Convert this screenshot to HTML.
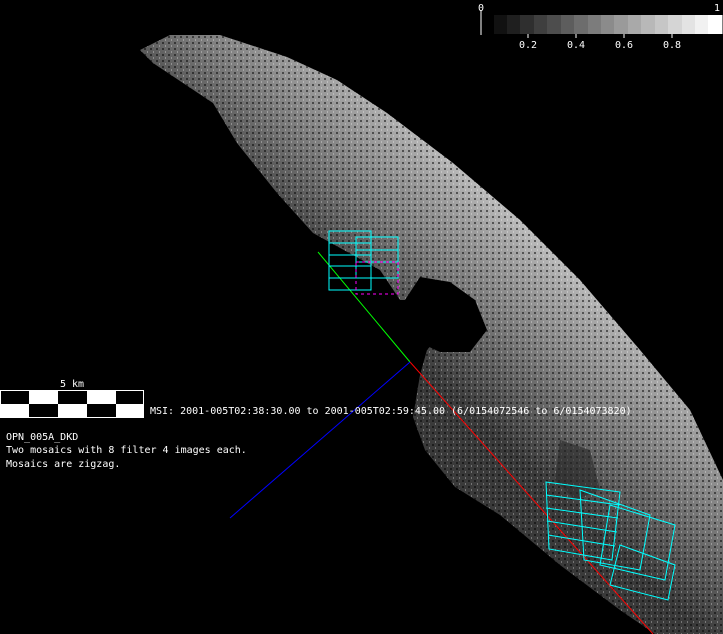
<!DOCTYPE html>
<html><head><meta charset="utf-8"><style>
html,body{margin:0;padding:0;background:#000;width:723px;height:634px;overflow:hidden}
svg{position:absolute;left:0;top:0}
.t{font-family:"DejaVu Sans Mono","Liberation Mono",monospace;font-size:10px;fill:#fff}
</style></head><body>
<svg width="723" height="634" viewBox="0 0 723 634">
<defs>
<linearGradient id="g" x1="380" y1="330" x2="520" y2="180" gradientUnits="userSpaceOnUse">
<stop offset="0" stop-color="#3a3a3a"/><stop offset="0.4" stop-color="#777"/><stop offset="0.75" stop-color="#a8a8a8"/><stop offset="1" stop-color="#dcdcdc"/>
</linearGradient>
<pattern id="p" width="6" height="6" patternUnits="userSpaceOnUse">
<rect x="0" y="0" width="2" height="2" fill="#000" opacity="0.5"/><rect x="3" y="3" width="1" height="2" fill="#fff" opacity="0.3"/>
</pattern>
</defs>
<polygon fill="url(#g)" points="140,50 170,35 220,35 287,57 337,80 387,113 453,163 520,220 580,280 640,350 690,410 723,480 723,634 655,634 620,610 560,565 500,515 455,487 425,450 413,417 420,375 427,350 440,335 455,310 430,300 400,300 380,270 313,233 277,193 237,143 213,103 153,63"/>
<polygon fill="url(#p)" points="140,50 170,35 220,35 287,57 337,80 387,113 453,163 520,220 580,280 640,350 690,410 723,480 723,634 655,634 620,610 560,565 500,515 455,487 425,450 413,417 420,375 427,350 440,335 455,310 430,300 400,300 380,270 313,233 277,193 237,143 213,103 153,63"/>
<polygon fill="#000" points="420,277 450,282 475,300 487,330 470,352 440,352 425,345 410,320 405,300"/>
<polygon fill="#2a2a2a" opacity="0.6" points="560,440 590,450 600,490 575,500 555,480"/>
<g stroke-width="1" fill="none">
<line x1="318" y1="252" x2="410" y2="362" stroke="#0f0"/>
<line x1="410" y1="362" x2="653" y2="634" stroke="#f00"/>
<line x1="410" y1="362" x2="230" y2="518" stroke="#00f"/>
</g>
<g stroke="#0ff" fill="none" stroke-width="1">
<rect x="329" y="231" width="42" height="59"/>
<rect x="356" y="237" width="42" height="41"/>
<line x1="329" y1="243" x2="371" y2="243"/><line x1="329" y1="255" x2="371" y2="255"/><line x1="329" y1="266" x2="371" y2="266"/><line x1="329" y1="278" x2="371" y2="278"/>
<line x1="356" y1="250" x2="398" y2="250"/><line x1="356" y1="262" x2="398" y2="262"/>
<polygon points="546,482 620,492 612,560 549,549"/>
<polygon points="580,490 650,515 640,570 584,560"/>
<polygon points="610,505 675,525 665,580 600,565"/>
<polygon points="620,545 675,565 668,600 610,585"/>
<line x1="546" y1="495" x2="620" y2="505"/><line x1="546" y1="508" x2="618" y2="518"/><line x1="547" y1="521" x2="617" y2="532"/><line x1="548" y1="535" x2="615" y2="546"/>
</g>
<rect x="356" y="262" width="42" height="32" fill="none" stroke="#f0f" stroke-dasharray="3,3"/>
<line x1="481" y1="10" x2="481" y2="35" stroke="#fff"/>
<g>
<rect x="494" y="15" width="14" height="19" fill="#111"/><rect x="507" y="15" width="14" height="19" fill="#1f1f1f"/><rect x="520" y="15" width="14" height="19" fill="#2f2f2f"/><rect x="534" y="15" width="14" height="19" fill="#3f3f3f"/><rect x="547" y="15" width="14" height="19" fill="#4d4d4d"/><rect x="561" y="15" width="14" height="19" fill="#5d5d5d"/><rect x="574" y="15" width="14" height="19" fill="#6d6d6d"/><rect x="588" y="15" width="14" height="19" fill="#7c7c7c"/><rect x="601" y="15" width="14" height="19" fill="#8b8b8b"/><rect x="614" y="15" width="14" height="19" fill="#9a9a9a"/><rect x="628" y="15" width="14" height="19" fill="#a9a9a9"/><rect x="641" y="15" width="14" height="19" fill="#b8b8b8"/><rect x="655" y="15" width="14" height="19" fill="#c6c6c6"/><rect x="668" y="15" width="14" height="19" fill="#d5d5d5"/><rect x="682" y="15" width="14" height="19" fill="#e3e3e3"/><rect x="695" y="15" width="14" height="19" fill="#f1f1f1"/><rect x="708" y="15" width="14" height="19" fill="#fff"/>
</g>
<g stroke="#fff"><line x1="528" y1="34" x2="528" y2="38"/><line x1="576" y1="34" x2="576" y2="38"/><line x1="624" y1="34" x2="624" y2="38"/><line x1="672" y1="34" x2="672" y2="38"/><line x1="722" y1="15" x2="722" y2="34"/></g>
<text class="t" x="478" y="11">0</text><text class="t" x="714" y="11">1</text>
<text class="t" x="528" y="48" text-anchor="middle">0.2</text><text class="t" x="576" y="48" text-anchor="middle">0.4</text><text class="t" x="624" y="48" text-anchor="middle">0.6</text><text class="t" x="672" y="48" text-anchor="middle">0.8</text>
<rect x="0" y="390" width="144" height="28" fill="#fff"/>
<rect x="1" y="391" width="28" height="13" fill="#000"/><rect x="58" y="391" width="29" height="13" fill="#000"/><rect x="116" y="391" width="27" height="13" fill="#000"/>
<rect x="29" y="404" width="29" height="13" fill="#000"/><rect x="87" y="404" width="29" height="13" fill="#000"/>
<text class="t" x="72" y="387" text-anchor="middle">5 km</text>
<text class="t" x="150" y="414">MSI:  2001-005T02:38:30.00 to 2001-005T02:59:45.00 (6/0154072546 to 6/0154073820)</text>
<text class="t" x="6" y="440">OPN_005A_DKD</text>
<text class="t" x="6" y="453">Two mosaics with 8 filter 4 images each.</text>
<text class="t" x="6" y="467">Mosaics are zigzag.</text>
</svg>
</body></html>
